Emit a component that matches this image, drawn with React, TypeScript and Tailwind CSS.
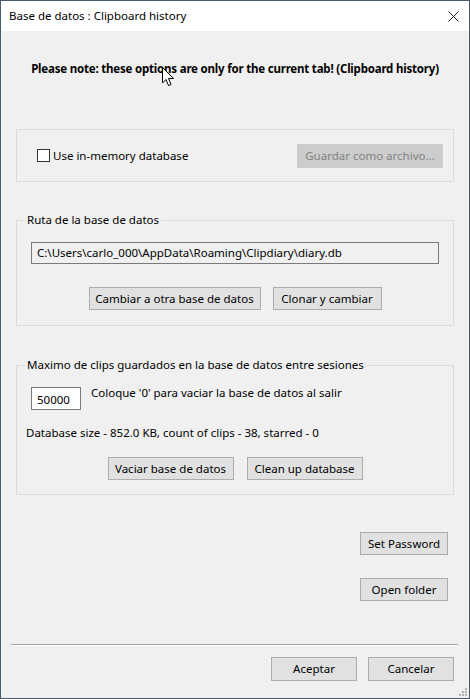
import React from "react";

const font = { fontFamily: '"Noto Sans", "Open Sans", sans-serif' };

function Btn({ label, className = "", disabled = false }: { label: string; className?: string; disabled?: boolean }) {
  return (
    <button
      className={
        "h-[23px] border text-[11.5px] leading-none flex items-center justify-center " +
        (disabled
          ? "bg-[#cccccc] border-[#cccccc] text-[#838383] "
          : "bg-[#e1e1e1] border-[#adadad] text-black ") +
        className
      }
    >
      {label}
    </button>
  );
}

export default function App() {
  return (
    <div
      className="relative w-[470px] h-[699px] border border-[#4a5b6f] bg-[#f0f0f0] flex flex-col text-black text-[11.5px]"
      style={font}
    >
      {/* title bar */}
      <div className="h-[30px] bg-white flex items-center justify-between pl-[8px] pr-[10px] shrink-0">
        <span className="text-[11.5px]">Base de datos : Clipboard history</span>
        <svg width="11" height="11" viewBox="0 0 11 11">
          <path d="M0.5 0.5 L10.5 10.5 M10.5 0.5 L0.5 10.5" stroke="#222" strokeWidth="1" />
        </svg>
      </div>

      <div className="flex flex-col px-[15px]">
        <p className="mt-[30px] h-[16px] leading-[16px] text-center font-bold text-[11.5px] whitespace-nowrap tracking-[-0.2px]">
          Please note: these options are only for the current tab! (Clipboard history)
        </p>

        {/* in-memory */}
        <div className="mt-[52px] h-[53px] border border-[#dcdcdc] flex items-center justify-between pl-[20px] pr-[10px]">
          <label className="flex items-center gap-[3px]">
            <span className="w-[13px] h-[13px] border border-[#333] bg-white" />
            <span>Use in-memory database</span>
          </label>
          <Btn label="Guardar como archivo..." disabled className="w-[146px] h-[24px]" />
        </div>

        {/* ruta */}
        <fieldset className="mt-[30px] border border-[#dcdcdc] px-[14px] pt-[14px] pb-[15px]">
          <legend className="px-[2px] ml-[-6px] h-[16px] leading-[16px]">Ruta de la base de datos</legend>
          <div className="h-[22px] border border-[#7a7a7a] bg-[#f0f0f0] flex items-center px-[5px]">
            C:\Users\carlo_000\AppData\Roaming\Clipdiary\diary.db
          </div>
          <div className="mt-[23px] flex justify-center gap-[12px]">
            <Btn label="Cambiar a otra base de datos" className="w-[172px]" />
            <Btn label="Clonar y cambiar" className="w-[109px]" />
          </div>
        </fieldset>

        {/* maximo */}
        <fieldset className="mt-[31px] border border-[#dcdcdc] px-[14px] pt-[14px] pb-[14px]">
          <legend className="px-[2px] ml-[-6px] h-[16px] leading-[16px]">
            Maximo de clips guardados en la base de datos entre sesiones
          </legend>
          <div className="flex items-start gap-[10px]">
            <div className="w-[50px] h-[23px] border border-[#7a7a7a] bg-white flex items-center px-[5px] pt-[2px]">
              50000
            </div>
            <span className="leading-[16px] mt-[-2px]">Coloque '0' para vaciar la base de datos al salir</span>
          </div>
          <p className="mt-[15px] ml-[-5px] leading-[16px]">
            Database size - 852.0 KB, count of clips - 38, starred - 0
          </p>
          <div className="mt-[16px] flex justify-center gap-[13px]">
            <Btn label="Vaciar base de datos" className="w-[126px]" />
            <Btn label="Clean up database" className="w-[116px]" />
          </div>
        </fieldset>
      </div>

      <div className="flex flex-col items-end pr-[21px]">
        <Btn label="Set Password" className="mt-[37px] w-[88px]" />
        <Btn label="Open folder" className="mt-[23px] w-[88px]" />
      </div>

      <div className="mt-[43px] ml-[10px] mr-[11px] h-[2px] border-t border-[#a0a0a0] border-b-white border-b" />

      <div className="mt-[11px] flex justify-end gap-[11px] pr-[15px]">
        <Btn label="Aceptar" className="w-[86px] h-[24px]" />
        <Btn label="Cancelar" className="w-[86px] h-[24px]" />
      </div>

      {/* resize grip */}
      <svg width="8" height="8" viewBox="0 0 8 8" className="absolute right-[2px] bottom-[2px]">
        <rect x="6" y="0" width="2" height="2" fill="#b0b0b0" />
        <rect x="3" y="3" width="2" height="2" fill="#b0b0b0" />
        <rect x="6" y="3" width="2" height="2" fill="#b0b0b0" />
        <rect x="0" y="6" width="2" height="2" fill="#b0b0b0" />
        <rect x="3" y="6" width="2" height="2" fill="#b0b0b0" />
        <rect x="6" y="6" width="2" height="2" fill="#b0b0b0" />
      </svg>

      {/* mouse cursor */}
      <svg width="13" height="20" viewBox="0 0 13 20" className="absolute left-[161px] top-[66px]">
        <path d="M0.5 0.5 L0.5 16 L4 12.5 L6.5 18.5 L9 17.5 L6.5 11.5 L11.5 11.5 Z" fill="white" stroke="black" strokeWidth="1" />
      </svg>
    </div>
  );
}
